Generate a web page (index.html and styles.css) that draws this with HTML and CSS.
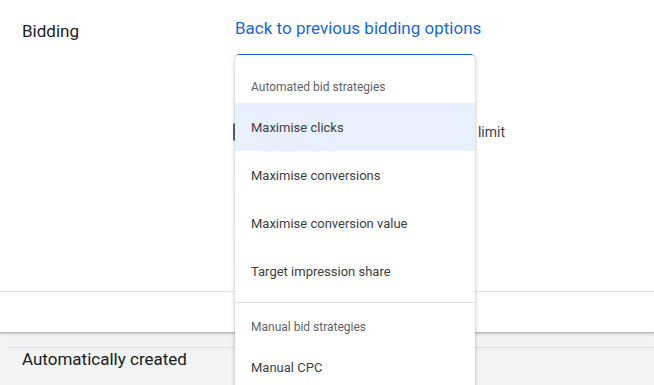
FILE: index.html
```html
<!DOCTYPE html>
<html lang="en">
<head>
    <meta charset="UTF-8">
    <meta name="viewport" content="width=device-width, initial-scale=1.0">
    <title>Bidding</title>
    <link rel="stylesheet" href="styles.css">
</head>
<body>
    <div class="card">
        <div class="section bidding">
            <div class="section-title">Bidding</div>
            <div class="section-body">
                <a class="back-link" href="#">Back to previous bidding options</a>
                <div class="select-box"></div>
                <label class="check-row">
                    <span class="checkbox"></span>
                    <span class="check-label">Set a max. CPC limit</span>
                </label>

                <!-- open dropdown, sits over the select -->
                <div class="menu">
                    <div class="menu-header">Automated bid strategies</div>
                    <div class="menu-item active">Maximise clicks</div>
                    <div class="menu-item">Maximise conversions</div>
                    <div class="menu-item">Maximise conversion value</div>
                    <div class="menu-item">Target impression share</div>
                    <div class="menu-divider"></div>
                    <div class="menu-header">Manual bid strategies</div>
                    <div class="menu-item">Manual CPC</div>
                </div>
            </div>
        </div>
        <div class="section empty"></div>
    </div>

    <div class="auto-section">
        <div class="section-title">Automatically created</div>
    </div>
</body>
</html>
```

FILE: styles.css
```css
html, body {
    height: 100%;
    overflow: hidden;
}
body {
    margin: 0;
    background-color: #f1f3f4;
    font-family: Roboto, Arial, sans-serif;
    color: #202124;
}
.card {
    background-color: #fff;
    box-shadow: 0 1px 2px rgba(60, 64, 67, 0.3), 0 1px 3px 1px rgba(60, 64, 67, 0.15);
}
.section {
    display: flex;
}
.bidding {
    height: 291px;
    border-bottom: 1px solid #e0e0e0;
}
.empty {
    height: 40px;
}
.section-title {
    width: 213px;
    padding: 19px 0 0 22px;
    font-size: 17px;
    line-height: 24px;
}
.section-body {
    position: relative;
    flex: 1;
    padding-top: 16px;
}
.back-link {
    display: inline-block;
    color: #1967d2;
    font-size: 17px;
    line-height: 24px;
    text-decoration: none;
}
.select-box {
    width: 236px;
    height: 40px;
    margin-top: 14px;
    border: 2px solid #1967d2;
    border-radius: 5px;
}
.check-row {
    display: flex;
    align-items: center;
    margin-top: 24px;
    margin-left: -2px;
    font-size: 14px;
    line-height: 20px;
    color: #3c4043;
}
.checkbox {
    width: 14px;
    height: 14px;
    border: 2px solid #5f6368;
    border-radius: 2px;
}
.check-label {
    display: block;
    width: 254px;
    text-align: right;
}
.menu {
    position: absolute;
    top: 55px;
    left: 0;
    width: 240px;
    padding-top: 8px;
    background-color: #fff;
    border-radius: 4px;
    box-shadow: 0 2px 2px 0 rgba(0, 0, 0, 0.14), 0 3px 1px -2px rgba(0, 0, 0, 0.12), 0 1px 5px 0 rgba(0, 0, 0, 0.2);
}
.menu-header {
    display: flex;
    align-items: flex-end;
    height: 32px;
    padding: 0 16px 8px;
    font-size: 12px;
    line-height: 16px;
    color: #5f6368;
}
.menu-item {
    display: flex;
    align-items: center;
    height: 48px;
    padding: 0 16px;
    font-size: 13px;
    color: #3c4043;
}
.menu-item.active {
    background-color: #e8f0fe;
}
.menu-divider {
    height: 1px;
    margin-top: 7px;
    background-color: #dadce0;
}
.auto-section {
    margin: 15px 0 0 8px;
    border-top: 1px solid #dadce0;
}
.auto-section .section-title {
    padding: 1px 0 0 14px;
    line-height: 20px;
}
```
